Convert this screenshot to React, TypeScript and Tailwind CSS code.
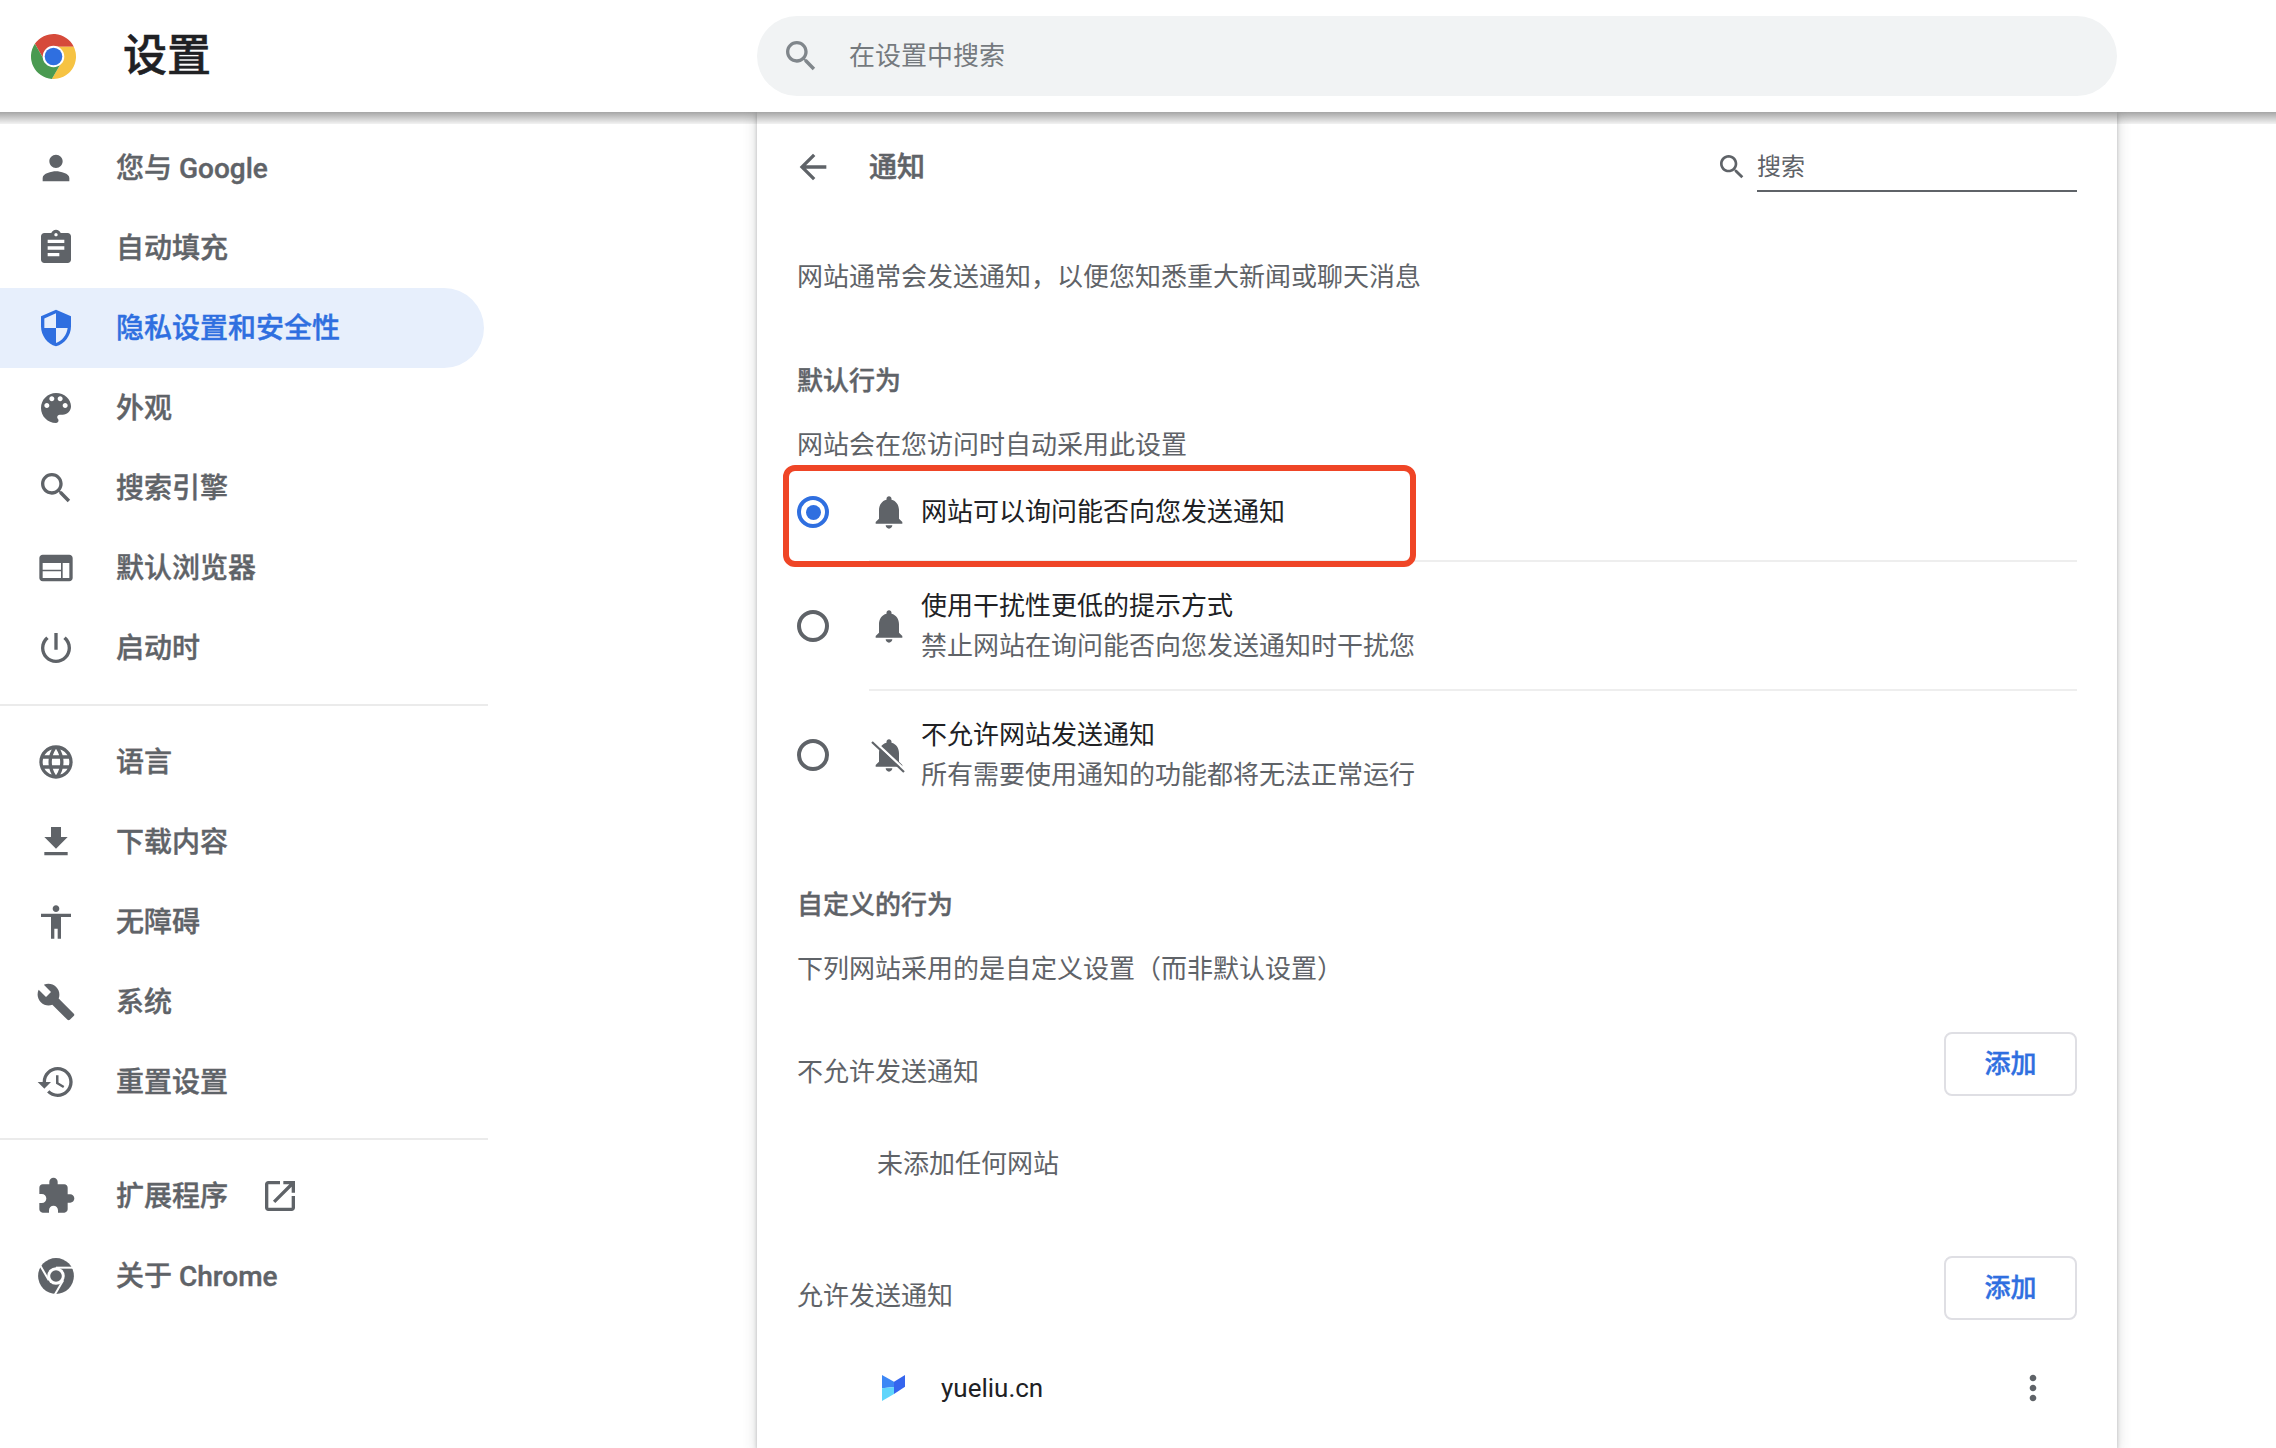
import { ReactNode } from "react";

const paths = {
  person: "M12 12c2.21 0 4-1.79 4-4s-1.79-4-4-4-4 1.79-4 4 1.79 4 4 4zm0 2c-2.67 0-8 1.34-8 4v2h16v-2c0-2.66-5.33-4-8-4z",
  assignment: "M19 3h-4.18C14.4 1.84 13.3 1 12 1c-1.3 0-2.4.84-2.82 2H5c-1.1 0-2 .9-2 2v14c0 1.1.9 2 2 2h14c1.1 0 2-.9 2-2V5c0-1.1-.9-2-2-2zm-7 0c.55 0 1 .45 1 1s-.45 1-1 1-1-.45-1-1 .45-1 1-1zm2 14H7v-2h7v2zm3-4H7v-2h10v2zm0-4H7V7h10v2z",
  security: "M12 1L3 5v6c0 5.55 3.84 10.74 9 12 5.16-1.26 9-6.45 9-12V5l-9-4zm0 10.99h7c-.53 4.12-3.28 7.79-7 8.94V12H5V6.3l7-3.11v8.8z",
  palette: "M12 3c-4.97 0-9 4.03-9 9s4.03 9 9 9c.83 0 1.5-.67 1.5-1.5 0-.39-.15-.74-.39-1.01-.23-.26-.38-.61-.38-.99 0-.83.67-1.5 1.5-1.5H16c2.76 0 5-2.24 5-5 0-4.42-4.03-8-9-8zm-5.5 9c-.83 0-1.5-.67-1.5-1.5S5.67 9 6.5 9 8 9.67 8 10.5 7.33 12 6.5 12zm3-4C8.67 8 8 7.33 8 6.5S8.67 5 9.5 5s1.5.67 1.5 1.5S10.33 8 9.5 8zm5 0c-.83 0-1.5-.67-1.5-1.5S13.67 5 14.5 5s1.5.67 1.5 1.5S15.33 8 14.5 8zm3 4c-.83 0-1.5-.67-1.5-1.5S16.67 9 17.5 9s1.5.67 1.5 1.5-.67 1.5-1.5 1.5z",
  search: "M15.5 14h-.79l-.28-.27C15.41 12.59 16 11.11 16 9.5 16 5.91 13.09 3 9.5 3S3 5.91 3 9.5 5.91 16 9.5 16c1.61 0 3.09-.59 4.23-1.57l.27.28v.79l5 4.99L20.49 19l-4.99-5zm-6 0C7.01 14 5 11.99 5 9.5S7.01 5 9.5 5 14 7.01 14 9.5 11.99 14 9.5 14z",
  web: "M20 4H4c-1.1 0-1.99.9-1.99 2L2 18c0 1.1.9 2 2 2h16c1.1 0 2-.9 2-2V6c0-1.1-.9-2-2-2zm-5 14H4v-4h11v4zm0-5H4V9h11v4zm5 5h-4V9h4v9z",
  power: "M13 3h-2v10h2V3zm4.83 2.17l-1.42 1.42C17.99 7.86 19 9.81 19 12c0 3.87-3.13 7-7 7s-7-3.13-7-7c0-2.19 1.01-4.14 2.58-5.42L6.17 5.17C4.23 6.82 3 9.26 3 12c0 4.97 4.03 9 9 9s9-4.03 9-9c0-2.74-1.23-5.18-3.17-6.83z",
  language: "M11.99 2C6.47 2 2 6.48 2 12s4.47 10 9.99 10C17.52 22 22 17.52 22 12S17.52 2 11.99 2zm6.93 6h-2.95c-.32-1.25-.78-2.45-1.38-3.56 1.84.63 3.37 1.91 4.33 3.56zM12 4.04c.83 1.2 1.48 2.53 1.91 3.96h-3.82c.43-1.43 1.08-2.76 1.91-3.96zM4.26 14C4.1 13.36 4 12.69 4 12s.1-1.36.26-2h3.38c-.08.66-.14 1.32-.14 2 0 .68.06 1.34.14 2H4.26zm.82 2h2.95c.32 1.25.78 2.45 1.38 3.56-1.84-.63-3.37-1.9-4.33-3.56zm2.95-8H5.08c.96-1.66 2.49-2.93 4.33-3.56C8.81 5.55 8.35 6.75 8.03 8zM12 19.96c-.83-1.2-1.48-2.53-1.91-3.96h3.82c-.43 1.43-1.08 2.76-1.91 3.96zM14.34 14H9.66c-.09-.66-.16-1.32-.16-2 0-.68.07-1.35.16-2h4.68c.09.65.16 1.32.16 2 0 .68-.07 1.34-.16 2zm.25 5.56c.6-1.11 1.06-2.31 1.38-3.56h2.95c-.96 1.65-2.49 2.93-4.33 3.56zM16.36 14c.08-.66.14-1.32.14-2 0-.68-.06-1.34-.14-2h3.38c.16.64.26 1.31.26 2s-.1 1.36-.26 2h-3.38z",
  download: "M19 9h-4V3H9v6H5l7 7 7-7zM5 18v2h14v-2H5z",
  accessibility: "M12 2c1.1 0 2 .9 2 2s-.9 2-2 2-2-.9-2-2 .9-2 2-2zm9 7h-6v13h-2v-6h-2v6H9V9H3V7h18v2z",
  build: "M22.7 19l-9.1-9.1c.9-2.3.4-5-1.5-6.9-2-2-5-2.4-7.4-1.3L9 6 6 9 1.6 4.7C.4 7.1.9 10.1 2.9 12.1c1.9 1.9 4.6 2.4 6.9 1.5l9.1 9.1c.4.4 1 .4 1.4 0l2.3-2.3c.5-.4.5-1.1.1-1.4z",
  restore: "M13 3c-4.97 0-9 4.03-9 9H1l3.89 3.89.07.14L9 12H6c0-3.87 3.13-7 7-7s7 3.13 7 7-3.13 7-7 7c-1.93 0-3.68-.79-4.94-2.06l-1.42 1.42C8.27 19.99 10.51 21 13 21c4.97 0 9-4.03 9-9s-4.03-9-9-9zm-1 5v5l4.28 2.54.72-1.21-3.5-2.08V8H12z",
  extension: "M20.5 11H19V7c0-1.1-.9-2-2-2h-4V3.5C13 2.12 11.88 1 10.5 1S8 2.12 8 3.5V5H4c-1.1 0-1.99.9-1.99 2v3.8H3.5c1.49 0 2.7 1.21 2.7 2.7s-1.21 2.7-2.7 2.7H2V20c0 1.1.9 2 2 2h3.8v-1.5c0-1.49 1.21-2.7 2.7-2.7 1.49 0 2.7 1.21 2.7 2.7V22H17c1.1 0 2-.9 2-2v-4h1.5c1.38 0 2.5-1.12 2.5-2.5S21.88 11 20.5 11z",
  open: "M19 19H5V5h7V3H5c-1.11 0-2 .9-2 2v14c0 1.1.89 2 2 2h14c1.1 0 2-.9 2-2v-7h-2v7zM14 3v2h3.59l-9.83 9.83 1.41 1.41L19 6.41V10h2V3h-7z",
  back: "M20 11H7.83l5.59-5.59L12 4l-8 8 8 8 1.41-1.41L7.83 13H20v-2z",
  bell: "M12 22c1.1 0 2-.9 2-2h-4c0 1.1.89 2 2 2zm6-6v-5c0-3.07-1.64-5.64-4.5-6.32V4c0-.83-.67-1.5-1.5-1.5s-1.5.67-1.5 1.5v.68C7.63 5.36 6 7.92 6 11v5l-2 2v1h16v-1l-2-2z",
  more: "M12 8c1.1 0 2-.9 2-2s-.9-2-2-2-2 .9-2 2 .9 2 2 2zm0 2c-1.1 0-2 .9-2 2s.9 2 2 2 2-.9 2-2-.9-2-2-2zm0 6c-1.1 0-2 .9-2 2s.9 2 2 2 2-.9 2-2-.9-2-2-2z",
};

function Icon({ d, className, children }: { d: string; className?: string; children?: ReactNode }) {
  return (
    <svg viewBox="0 0 24 24" fill="currentColor" className={className}>
      <path d={d} />
      {children}
    </svg>
  );
}

function ChromeLogo() {
  return (
    <svg viewBox="0 0 48 48" className="w-[47px] h-[47px]">
      <path d="M24 14L44.7 14A23 23 0 0 0 4.99 11.07L15.34 29Z" fill="#d64a3a" />
      <path d="M32.66 29L22.31 46.93A23 23 0 0 0 44.7 14L24 14Z" fill="#f6c343" />
      <path d="M15.34 29L4.99 11.07A23 23 0 0 0 22.31 46.93L32.66 29Z" fill="#4a9a51" />
      <circle cx="24" cy="24" r="11" fill="#fff" />
      <circle cx="24" cy="24" r="9" fill="#2f6fe0" />
    </svg>
  );
}

function ChromeMono() {
  return (
    <svg viewBox="0 0 48 48" className="w-10 h-10 text-[#5f6368]">
      <circle cx="24" cy="24" r="21.5" fill="currentColor" />
      <g stroke="#fff" strokeWidth="2.4">
        <line x1="24" y1="14" x2="46" y2="14" />
        <line x1="32.66" y1="29" x2="21.6" y2="48" />
        <line x1="15.34" y1="29" x2="4.2" y2="10" />
      </g>
      <circle cx="24" cy="24" r="10.5" fill="#fff" />
      <circle cx="24" cy="24" r="7" fill="currentColor" />
    </svg>
  );
}

function SiteLogo() {
  return (
    <svg viewBox="0 0 69 78" className="w-[23px] h-[26px]">
      <polygon points="0,0 36,20 36,36 0,40" fill="#3d87f5" />
      <polygon points="0,40 36,36 36,57 0,78" fill="#5fd5fb" />
      <polygon points="69,0 36,20 36,57 69,35" fill="#3565ee" />
    </svg>
  );
}

function NavItem({ icon, label, active, children }: { icon: ReactNode; label: string; active?: boolean; children?: ReactNode }) {
  return (
    <div className={`h-20 w-[484px] flex items-center pl-9 rounded-r-full text-[28px] font-medium [-webkit-text-stroke:0.4px] ${active ? "bg-[#e7effc] text-[#2f6fe0]" : "text-[#5f6368]"}`}>
      <div className="w-10 h-10 mr-10 shrink-0">{icon}</div>
      <span className="pt-px">{label}</span>
      {children}
    </div>
  );
}

function Divider() {
  return <div className="w-[488px] h-[2px] bg-[#ebebeb] my-4" />;
}

function Radio({ checked }: { checked?: boolean }) {
  return (
    <div className={`w-8 h-8 rounded-full border-4 flex items-center justify-center shrink-0 ${checked ? "border-[#2f6fe0]" : "border-[#5f6368]"}`}>
      {checked && <div className="w-[15px] h-[15px] rounded-full bg-[#2f6fe0]" />}
    </div>
  );
}

function RadioRow({ icon, title, sub, checked, className }: { icon: ReactNode; title: string; sub?: string; checked?: boolean; className: string }) {
  return (
    <div className={`flex items-center ${className}`}>
      <Radio checked={checked} />
      {icon}
      <div className="text-[26px] leading-[40px]">
        <div className="text-[#202124]">{title}</div>
        {sub && <div className="text-[#5f6368]">{sub}</div>}
      </div>
    </div>
  );
}

const rowIcon = "w-10 h-10 ml-10 mr-3 text-[#5f6368] shrink-0";

function AddRow({ label, className }: { label: string; className: string }) {
  return (
    <div className={`flex items-start justify-between ${className}`}>
      <div className="mt-5 text-[#5f6368]">{label}</div>
      <button className="w-[133px] h-16 rounded-lg border-2 border-[#dfdfe4] bg-white text-[#2f6fe0] text-[26px] font-medium [-webkit-text-stroke:0.4px]">添加</button>
    </div>
  );
}

export default function App() {
  return (
    <div className="relative w-[2276px] h-[1448px] overflow-hidden bg-white font-[Roboto,'Noto_Sans_CJK_SC',sans-serif]">
      <header className="relative z-10 h-28 flex items-center bg-white">
        <div className="w-[757px] flex items-center pl-[30px]">
          <ChromeLogo />
          <h1 className="ml-[46px] text-[44px] leading-[56px] font-medium text-[#202124] [-webkit-text-stroke:0.5px]">设置</h1>
        </div>
        <div className="w-[1360px] h-20 rounded-full bg-[#f1f3f4] flex items-center pl-[24px]">
          <Icon d={paths.search} className="w-10 h-10 text-[#80868b]" />
          <span className="ml-[28px] text-[26px] text-[#757a7e]">在设置中搜索</span>
        </div>
        <div className="absolute top-full left-0 w-full h-3 bg-linear-to-b from-black/35 to-black/[.05]" />
      </header>

      <div className="flex h-[1336px]">
        <nav className="w-[757px] pt-4 shrink-0">
          <NavItem icon={<Icon d={paths.person} />} label="您与 Google" />
          <NavItem icon={<Icon d={paths.assignment} />} label="自动填充" />
          <NavItem icon={<Icon d={paths.security} />} label="隐私设置和安全性" active />
          <NavItem icon={<Icon d={paths.palette} />} label="外观" />
          <NavItem icon={<Icon d={paths.search} />} label="搜索引擎" />
          <NavItem icon={<Icon d={paths.web} />} label="默认浏览器" />
          <NavItem icon={<Icon d={paths.power} />} label="启动时" />
          <Divider />
          <NavItem icon={<Icon d={paths.language} />} label="语言" />
          <NavItem icon={<Icon d={paths.download} />} label="下载内容" />
          <NavItem icon={<Icon d={paths.accessibility} />} label="无障碍" />
          <NavItem icon={<Icon d={paths.build} />} label="系统" />
          <NavItem icon={<Icon d={paths.restore} />} label="重置设置" />
          <Divider />
          <NavItem icon={<Icon d={paths.extension} />} label="扩展程序">
            <Icon d={paths.open} className="w-10 h-10 ml-8" />
          </NavItem>
          <NavItem icon={<ChromeMono />} label="关于 Chrome" />
        </nav>

        <main className="relative w-[1360px] shrink-0 px-10 pt-[15px] bg-white shadow-[0_2px_4px_rgba(60,64,67,0.3),0_2px_12px_2px_rgba(60,64,67,0.15)] text-[26px] leading-[40px] text-[#5f6368]">
          <div className="h-20 flex items-center">
            <Icon d={paths.back} className="w-10 h-10 -ml-[4px] text-[#5f6368]" />
            <span className="ml-[36px] pt-[2px] text-[28px] font-medium text-[#5f6368] [-webkit-text-stroke:0.5px]">通知</span>
            <div className="ml-auto flex items-center">
              <Icon d={paths.search} className="w-8 h-8 text-[#5f6368]" />
              <div className="ml-[9px] w-[320px] h-[50px] border-b-2 border-[#5f6368] text-[24px] leading-[50px]">搜索</div>
            </div>
          </div>

          <p className="mt-[50px]">网站通常会发送通知，以便您知悉重大新闻或聊天消息</p>
          <h2 className="mt-16 font-medium [-webkit-text-stroke:0.4px]">默认行为</h2>
          <p className="mt-6">网站会在您访问时自动采用此设置</p>

          <RadioRow icon={<Icon d={paths.bell} className={rowIcon} />} title="网站可以询问能否向您发送通知" checked className="h-[94px] mb-px" />
          <div className="ml-[72px] h-[2px] bg-[#eeeeee]" />
          <RadioRow icon={<Icon d={paths.bell} className={rowIcon} />} title="使用干扰性更低的提示方式" sub="禁止网站在询问能否向您发送通知时干扰您" className="h-[127px]" />
          <div className="ml-[72px] h-[2px] bg-[#eeeeee]" />
          <RadioRow
            icon={
              <Icon d={paths.bell} className={rowIcon}>
                <line x1="2.6" y1="3.2" x2="21.8" y2="21.2" stroke="#fff" strokeWidth="1.5" />
                <line x1="1.8" y1="4.2" x2="21" y2="22.2" stroke="currentColor" strokeWidth="1.3" />
              </Icon>
            }
            title="不允许网站发送通知"
            sub="所有需要使用通知的功能都将无法正常运行"
            className="h-32"
          />

          <h2 className="mt-[66px] font-medium [-webkit-text-stroke:0.4px]">自定义的行为</h2>
          <p className="mt-6">下列网站采用的是自定义设置（而非默认设置）</p>
          <AddRow label="不允许发送通知" className="mt-[43px]" />
          <p className="mt-12 ml-20">未添加任何网站</p>
          <AddRow label="允许发送通知" className="mt-[72px]" />
          <div className="mt-[28px] h-20 flex items-center pl-[85px]">
            <SiteLogo />
            <span className="ml-9 text-[#202124]">yueliu.cn</span>
            <Icon d={paths.more} className="w-10 h-10 ml-auto mr-6 text-[#5f6368]" />
          </div>

          {/* red annotation drawn over the first radio row */}
          <div className="absolute left-[26px] top-[353px] w-[633px] h-[102px] rounded-xl border-[6px] border-[#ef4526]" />
        </main>
      </div>
    </div>
  );
}
